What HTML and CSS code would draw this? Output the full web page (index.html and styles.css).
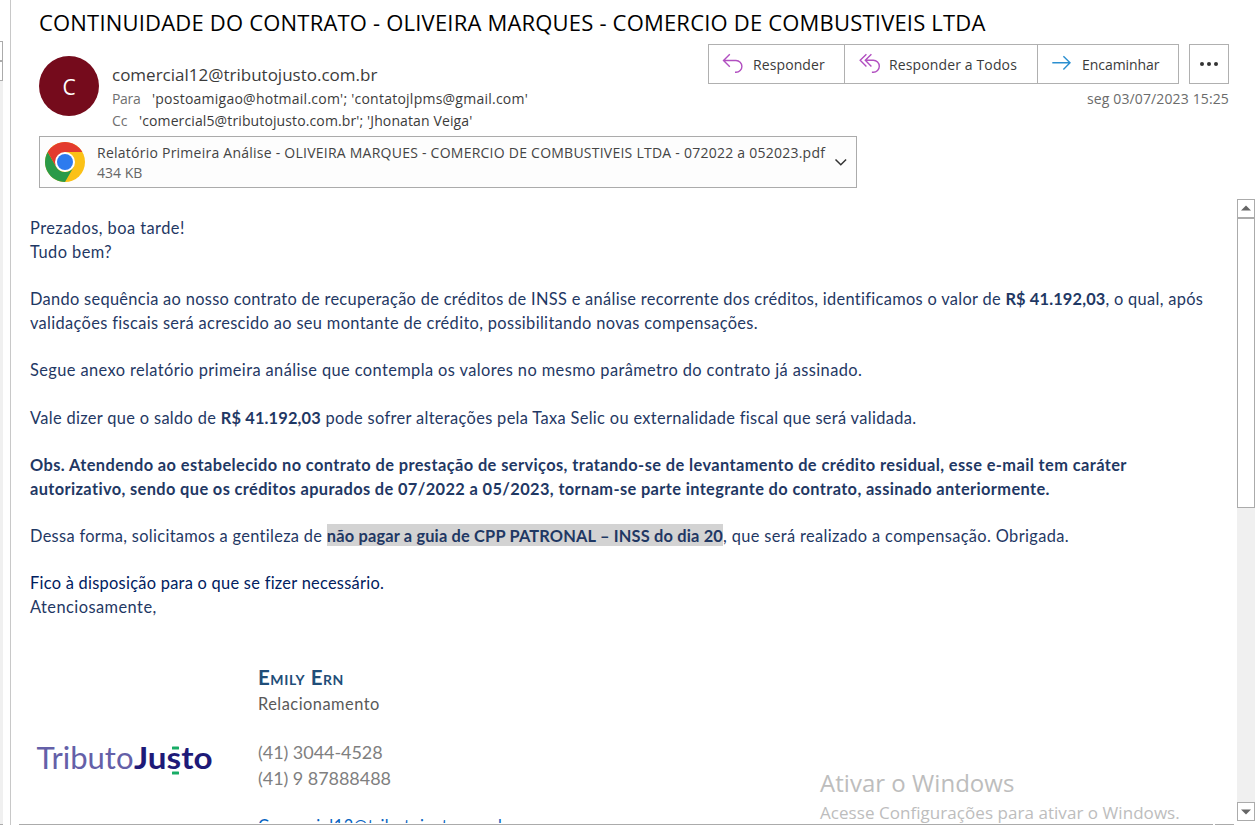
FILE: index.html
```
<!DOCTYPE html>
<html lang="pt-BR">
<head>
<meta charset="utf-8">
<title>Continuidade do contrato</title>
<link rel="stylesheet" href="styles.css">
</head>
<body>
<div class="app">
  <aside class="list-edge">
    <div class="edge-box edge-up"></div>
    <div class="edge-box edge-thumb"></div>
    <div class="edge-track"></div>
  </aside>

  <main class="pane">
    <h1 class="subject">CONTINUIDADE DO CONTRATO - OLIVEIRA MARQUES - COMERCIO DE COMBUSTIVEIS LTDA</h1>

    <header class="meta">
      <div class="avatar">C</div>
      <div class="people">
        <div class="sender">comercial12@tributojusto.com.br</div>
        <div class="recipients"><span class="label label-to">Para</span><span class="to">'postoamigao@hotmail.com'; 'contatojlpms@gmail.com'</span></div>
        <div class="recipients"><span class="label label-cc">Cc</span><span class="cc">'comercial5@tributojusto.com.br'; 'Jhonatan Veiga'</span></div>
      </div>
      <div class="side">
        <div class="actions">
          <div class="group">
            <div class="btn reply">
              <svg width="22" height="22" viewBox="0 0 22 22" fill="none" stroke="#b14fc0" stroke-width="1.4"><path d="M7.8 1.2 1.5 7.5l6.3 6.3M1.5 7.5H14a5.9 5.9 0 0 1 0 11.800h-1"/></svg>
              <span>Responder</span>
            </div>
            <div class="btn reply-all">
              <svg width="22" height="22" viewBox="0 0 22 22" fill="none" stroke="#b14fc0" stroke-width="1.4"><path d="M7.4 1.2 1.2 7.3l6.200 6.1M12.4 1.2 6.3 7.3l6.100 6.1M6.300 7.3h8a6 6 0 0 1 0 12h-1.4"/></svg>
              <span>Responder a Todos</span>
            </div>
            <div class="btn forward">
              <svg width="22" height="22" viewBox="0 0 22 22" fill="none" stroke="#2b8fd0" stroke-width="1.4"><path d="M1.3 9.8h18M12.4 3.2 19 9.8l-6.6 6.6"/></svg>
              <span>Encaminhar</span>
            </div>
          </div>
          <div class="more"><i></i><i></i><i></i></div>
        </div>
        <div class="date">seg 03/07/2023 15:25</div>
      </div>
    </header>

    <div class="attachment">
      <svg class="chrome" width="40" height="40" viewBox="0 0 40 40">
        <circle cx="20" cy="20" r="20" fill="#fbc116"/>
        <path d="M2.7 10 11.3 25A10 10 0 0 0 28.700 25L20 40A20 20 0 0 1 2.700 10z" fill="#2a9a48"/>
        <path d="M2.7 10A20 20 0 0 1 37.300 10H20L11.300 25z" fill="#e33b2e"/>
        <circle cx="20" cy="20" r="10" fill="#fff"/>
        <circle cx="20" cy="20" r="8" fill="#2d7bee"/>
      </svg>
      <div class="file">
        <div class="filename">Relatório Primeira Análise - OLIVEIRA MARQUES - COMERCIO DE COMBUSTIVEIS LTDA - 072022 a 052023.pdf</div>
        <div class="filesize">434 KB</div>
      </div>
      <svg class="chevron" width="14" height="10" viewBox="0 0 14 10" fill="none" stroke="#333" stroke-width="1.5"><path d="m1.5 2.500 5.300 5.200L12.100 2.500"/></svg>
    </div>

    <div class="reader">
      <article class="message">
        <p class="greeting">Prezados, boa tarde!<br>Tudo bem?</p>
        <p><span class="l1">Dando sequência ao nosso contrato de recuperação de créditos de INSS e análise recorrente dos créditos, identificamos o valor de <b>R$ 41.192,03</b>, o qual, após</span><br><span class="l2">validações fiscais será acrescido ao seu montante de crédito, possibilitando novas compensações.</span></p>
        <p class="l3">Segue anexo relatório primeira análise que contempla os valores no mesmo parâmetro do contrato já assinado.</p>
        <p class="l4">Vale dizer que o saldo de <b>R$ 41.192,03</b> pode sofrer alterações pela Taxa Selic ou externalidade fiscal que será validada.</p>
        <p class="strong">Obs. Atendendo ao estabelecido no contrato de prestação de serviços, tratando-se de levantamento de crédito residual, esse e-mail tem caráter<br><span class="l5">autorizativo, sendo que os créditos apurados de 07/2022 a 05/2023, tornam-se parte integrante do contrato, assinado anteriormente.</span></p>
        <p><span class="l6">Dessa forma, solicitamos a gentileza de </span><mark>não pagar a guia de CPP PATRONAL – INSS do dia 20</mark>, que será realizado a compensação. Obrigada.</p>
        <p class="greeting"><span class="closing">Fico à disposição para o que se fizer necessário.</span><br>Atenciosamente,</p>

        <div class="signature">
          <svg class="logo" width="180" height="44" viewBox="0 0 180 44" role="img" aria-label="TributoJusto">
            <text class="logo-thin" x="0.500" y="30" textLength="97" lengthAdjust="spacingAndGlyphs">Tributo</text>
            <text class="logo-bold" x="98" y="30" textLength="78.500" lengthAdjust="spacingAndGlyphs">Justo</text>
            <rect x="136" y="7.500" width="7" height="3" rx=".6" fill="#18ac66"/>
            <rect x="136" y="32.500" width="7" height="3" rx=".6" fill="#18ac66"/>
          </svg>
          <div class="contact">
            <div class="name">Emily Ern</div>
            <div class="role">Relacionamento</div>
            <div class="phone first">(41) 3044-4528</div>
            <div class="phone">(41) 9 87888488</div>
            <div class="email">Comercial12@tributojusto.com.br</div>
          </div>
        </div>
      </article>
      <div class="scrollbar">
        <div class="arrow up"><svg width="10" height="6" viewBox="0 0 10 6"><path d="M0 5.500 5 .5l5 5z" fill="#666"/></svg></div>
        <div class="thumb"></div>
        <div class="track"></div>
        <div class="arrow"><svg width="10" height="6" viewBox="0 0 10 6"><path d="M0 .5h10l-5 5z" fill="#666"/></svg></div>
      </div>
    </div>
    <div class="baseline"><span></span><span></span></div>
  </main>
</div>
<div class="watermark">
  <div class="wm-title">Ativar o Windows</div>
  <div class="wm-text">Acesse Configurações para ativar o Windows.</div>
</div>
</body>
</html>
```

FILE: styles.css
```
* { box-sizing: border-box; }

body {
  margin: 0;
  background: #fff;
  color: #3b3b3b;
  font-family: "Open Sans", "Noto Sans", sans-serif;
  font-size: 14px;
  white-space: nowrap;
  overflow: hidden;
}

svg { display: block; flex: none; }

.app { display: flex; width: 1257px; height: 825px; }

/* Edge of the message list */
.list-edge {
  display: flex;
  flex-direction: column;
  width: 11px;
  padding-top: 41px;
  border-right: 1px solid #c8c8c8;
}
.edge-box { width: 3px; height: 20px; border: 1px solid #ababab; border-left: 0; }
.edge-track { flex: 1; width: 3px; background: #f0f0f0; border-bottom: 1px solid #ababab; }

.pane { display: flex; flex-direction: column; flex: 1; min-width: 0; }

.subject {
  height: 44px;
  margin: 0;
  padding-left: 28px;
  color: #000;
  font-size: 22px;
  font-weight: 400;
  line-height: 45px;
  letter-spacing: .195px;
}

/* Sender, recipients and actions */
.meta { display: flex; height: 92px; padding: 0 28px; }
.avatar {
  width: 60px;
  height: 60px;
  margin-top: 12px;
  border-radius: 50%;
  background: #750b1c;
  color: #fff;
  font-size: 21px;
  line-height: 62px;
  text-align: center;
}
.people { flex: 1; padding: 19px 0 0 13px; }
.sender { font-size: 17px; line-height: 24px; height: 25px; }
.recipients { display: flex; height: 22px; line-height: 22px; color: #3b3b3b; }
.label { color: #707070; }
.label-to { width: 40px; letter-spacing: -.3px; }
.label-cc { width: 27px; }
.to { letter-spacing: .24px; }
.cc { letter-spacing: .12px; }

.side { display: flex; flex-direction: column; align-items: flex-end; }
.actions { display: flex; gap: 10px; }
.group { display: flex; border: 1px solid #b0b0b0; height: 40px; }
.btn { display: flex; align-items: center; line-height: 38px; letter-spacing: .1px; }
.btn span { padding-top: 2px; }
.btn + .btn { border-left: 1px solid #b0b0b0; }
.btn svg { margin-left: 13px; }
.reply { width: 135px; }
.reply span { margin-left: 9px; }
.reply-all { width: 193px; }
.reply-all svg { margin-left: 14px; }
.reply-all span { margin-left: 8px; letter-spacing: .13px; }
.forward { width: 141px; }
.forward span { margin-left: 9px; letter-spacing: -.05px; }
.more {
  display: flex;
  align-items: center;
  justify-content: center;
  gap: 3px;
  width: 40px;
  height: 40px;
  padding-bottom: 1px;
  border: 1px solid #b0b0b0;
}
.more i { width: 4px; height: 4px; border-radius: 50%; background: #333; }
.date { margin-top: 4px; color: #6b6b6b; line-height: 22px; letter-spacing: .13px; }

/* Attachment */
.attachment {
  display: flex;
  align-items: center;
  width: 818px;
  height: 52px;
  margin-left: 28px;
  padding-left: 5px;
  border: 1px solid #ababab;
  background: #fdfdfd;
}
.file { width: 738px; padding: 2px 0 0 12px; line-height: 20px; }
.filename { color: #444; letter-spacing: .242px; }
.filesize { color: #666; }
.chevron { margin-left: 11px; }

/* Message body */
.reader { display: flex; height: 636px; padding: 11px 2px 1px 0; }
.message {
  flex: 1;
  min-width: 0;
  height: 624px;
  padding: 17px 0 0 19px;
  overflow: hidden;
  color: #1f3864;
  font-family: "Lato", sans-serif;
  font-size: 16.4px;
  font-variant-ligatures: none;
  line-height: 23.7px;
  letter-spacing: .36px;
}
.message p { margin: 0 0 23.7px; }
.message b { letter-spacing: .15px; }
.greeting { letter-spacing: .45px; }
.l1 { letter-spacing: .308px; }
.l2 { letter-spacing: .34px; }
.l3 { letter-spacing: .4px; }
.l4 { letter-spacing: .335px; }
.strong { font-weight: 700; letter-spacing: .4px; }
.l5 { letter-spacing: .365px; }
.l6 { letter-spacing: .31px; }
mark { padding: 2px 0 1px; background: #d3d3d3; color: inherit; font-weight: 700; letter-spacing: .165px; }
.closing { color: #002060; letter-spacing: .27px; }

.signature { display: flex; padding-top: 21px; }
.logo { margin: 75px 42px 0 6px; }
.logo text { font-family: "Lato", sans-serif; font-size: 30px; letter-spacing: 0; }
.logo-thin { fill: #6460a8; font-weight: 400; }
.logo-bold { fill: #1e1a78; font-weight: 700; }
.contact { line-height: 26px; letter-spacing: 0; }
.name { height: 27px; color: #1f4e79; font-size: 20.5px; font-weight: 700; font-variant: small-caps; letter-spacing: .58px; }
.role { color: #595959; letter-spacing: .48px; }
.phone { color: #7f7f7f; font-size: 18px; letter-spacing: -.05px; }
.phone.first { margin-top: 22px; }
.email { margin-top: 22px; color: #0563c1; letter-spacing: .45px; }

.scrollbar { display: flex; flex-direction: column; width: 18px; height: 622px; background: #f0f0f0; }
.arrow {
  display: flex;
  align-items: center;
  justify-content: center;
  height: 19px;
  border: 1px solid #ababab;
  background: #fff;
}
.arrow.up { padding-bottom: 1px; }
.thumb { height: 290px; border: 1px solid #ababab; background: #fff; }
.track { flex: 1; }

.baseline { display: flex; gap: 2px; height: 1px; padding-left: 8px; }
.baseline span { width: 1194px; background: #ababab; }
.baseline span + span { width: 19px; }

/* System notice floating over the window */
.watermark { position: absolute; left: 820px; top: 766px; color: #bdbdbd; }
.wm-title { font-size: 24px; line-height: 34px; letter-spacing: .03px; }
.wm-text { font-size: 17px; line-height: 26px; letter-spacing: .05px; }
```
